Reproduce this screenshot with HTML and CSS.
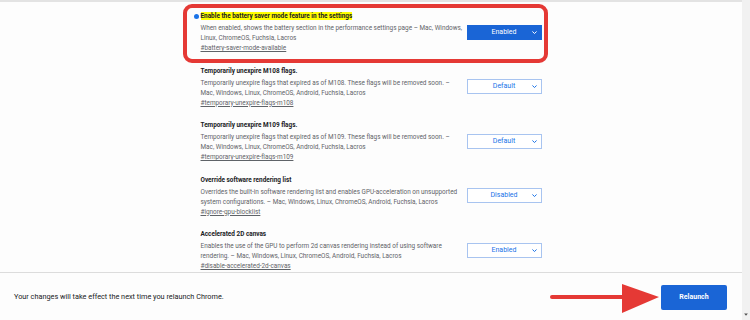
FILE: index.html
```html
<!DOCTYPE html>
<html lang="en">
<head>
    <meta charset="UTF-8">
    <title>Experiments</title>
    <link rel="stylesheet" href="styles.css">
</head>
<body>

<div class="page">
    <div class="flags">
        <div class="flag-list">

            <div class="flag flag-marked">
                <div class="flag-text">
                    <div class="flag-title"><span class="dot"></span><mark>Enable the battery saver mode feature in the settings</mark></div>
                    <div class="flag-desc">When enabled, shows the battery section in the performance settings page – Mac, Windows,<br>Linux, ChromeOS, Fuchsia, Lacros</div>
                    <a class="flag-link">#battery-saver-mode-available</a>
                </div>
                <div class="select select-on">Enabled<svg viewBox="0 0 8 6"><path d="M1.5 1.8 4 4.2 6.5 1.8"/></svg></div>
                <div class="callout"></div>
            </div>

            <div class="flag">
                <div class="flag-text">
                    <div class="flag-title">Temporarily unexpire M108 flags.</div>
                    <div class="flag-desc">Temporarily unexpire flags that expired as of M108. These flags will be removed soon. –<br>Mac, Windows, Linux, ChromeOS, Android, Fuchsia, Lacros</div>
                    <a class="flag-link">#temporary-unexpire-flags-m108</a>
                </div>
                <div class="select">Default<svg viewBox="0 0 8 6"><path d="M1.5 1.8 4 4.2 6.5 1.8"/></svg></div>
            </div>

            <div class="flag">
                <div class="flag-text">
                    <div class="flag-title">Temporarily unexpire M109 flags.</div>
                    <div class="flag-desc">Temporarily unexpire flags that expired as of M109. These flags will be removed soon. –<br>Mac, Windows, Linux, ChromeOS, Android, Fuchsia, Lacros</div>
                    <a class="flag-link">#temporary-unexpire-flags-m109</a>
                </div>
                <div class="select">Default<svg viewBox="0 0 8 6"><path d="M1.5 1.8 4 4.2 6.5 1.8"/></svg></div>
            </div>

            <div class="flag">
                <div class="flag-text">
                    <div class="flag-title">Override software rendering list</div>
                    <div class="flag-desc">Overrides the built-in software rendering list and enables GPU-acceleration on unsupported<br>system configurations. – Mac, Windows, Linux, ChromeOS, Android, Fuchsia, Lacros</div>
                    <a class="flag-link">#ignore-gpu-blocklist</a>
                </div>
                <div class="select">Disabled<svg viewBox="0 0 8 6"><path d="M1.5 1.8 4 4.2 6.5 1.8"/></svg></div>
            </div>

            <div class="flag">
                <div class="flag-text">
                    <div class="flag-title">Accelerated 2D canvas</div>
                    <div class="flag-desc">Enables the use of the GPU to perform 2d canvas rendering instead of using software<br>rendering. – Mac, Windows, Linux, ChromeOS, Android, Fuchsia, Lacros</div>
                    <a class="flag-link">#disable-accelerated-2d-canvas</a>
                </div>
                <div class="select">Enabled<svg viewBox="0 0 8 6"><path d="M1.5 1.8 4 4.2 6.5 1.8"/></svg></div>
            </div>

        </div>
    </div>

    <div class="footer">
        <div class="footer-text">Your changes will take effect the next time you relaunch Chrome.</div>
        <button class="relaunch">Relaunch</button>
        <!-- red pointer arrow -->
        <svg class="pointer" viewBox="0 0 112 32">
            <path d="M2 14 H76" stroke="#e53935" stroke-width="4" stroke-linecap="round"/>
            <path d="M72 1 L109 14 L72 30 Z" fill="#e53935"/>
        </svg>
    </div>
</div>

<div class="scrollbar">
    <svg viewBox="0 0 8 6"><path d="M1.5 1.5 H6.5 L4 4.5 Z"/></svg>
</div>

</body>
</html>
```

FILE: styles.css
```css
html, body {
    margin: 0;
    height: 100%;
    overflow: hidden;
}

body {
    display: flex;
    font-family: Roboto, "Noto Sans", sans-serif;
    background-color: white;
    color: #202124;
}

.page {
    flex: 1;
    display: flex;
    flex-direction: column;
    min-width: 0;
}

.flags {
    flex: 1;
    overflow: hidden;
    border-top: 2px solid #e3e3e3;
    background-color: #fdfdfd;
}

.flag-list {
    width: 341px;
    margin: 0 auto;
    padding-top: 9px;
}

.flag {
    position: relative;
    display: flex;
    align-items: center;
    margin-bottom: 12.5px;
}

.flag-text {
    flex: 1;
    font-size: 6.4px;
    line-height: 10px;
}

.flag-title {
    position: relative;
    font-weight: bold;
    margin-bottom: 2px;
    white-space: nowrap;
}

.flag-title mark {
    background-color: #ffff00;
    color: #202124;
}

.dot {
    position: absolute; /* sits left of the column */
    left: -7px;
    top: 2.5px;
    width: 5px;
    height: 5px;
    border-radius: 50%;
    background-color: #1a73e8;
}

.flag-desc {
    color: #5f6368;
    white-space: nowrap;
}

.flag-link {
    display: block;
    color: #5f6368;
    text-decoration: underline;
}

.select {
    position: relative;
    width: 73px;
    height: 13px;
    border: 1px solid #a8c4f0;
    color: #1a73e8;
    font-size: 7px;
    line-height: 13px;
    text-align: center;
    background-color: white;
}

.select svg {
    position: absolute;
    right: 3px;
    top: 4px;
    width: 7px;
    height: 5px;
    fill: none;
    stroke: currentColor;
    stroke-width: 1.2;
}

.select-on {
    background-color: #1a65d6;
    border-color: #1a65d6;
    color: white;
}

.callout {
    position: absolute; /* annotation drawn over the row */
    left: -18px;
    top: -7px;
    width: 357px;
    height: 51px;
    border: 4px solid #e53935;
    border-radius: 9px;
    pointer-events: none;
}

.footer {
    position: relative;
    height: 47px;
    display: flex;
    align-items: center;
    justify-content: space-between;
    padding: 0 15px 0 14px;
    border-top: 1px solid #dcdcdc;
    background-color: #fdfdfd;
}

.footer-text {
    font-size: 7.3px;
    color: #202124;
}

.relaunch {
    width: 66px;
    height: 25px;
    margin-top: 1px;
    border: none;
    border-radius: 2px;
    background-color: #1a65d6;
    color: white;
    font-family: inherit;
    font-size: 7px;
    font-weight: bold;
}

.pointer {
    position: absolute;
    left: 550px;
    top: 10px;
    width: 112px;
    height: 32px;
}

.scrollbar {
    width: 8px;
    position: relative;
    background-color: #f1f1f1;
}

.scrollbar svg {
    position: absolute;
    bottom: 3px;
    left: 1px;
    width: 6px;
    height: 5px;
    fill: #505050;
}
```
